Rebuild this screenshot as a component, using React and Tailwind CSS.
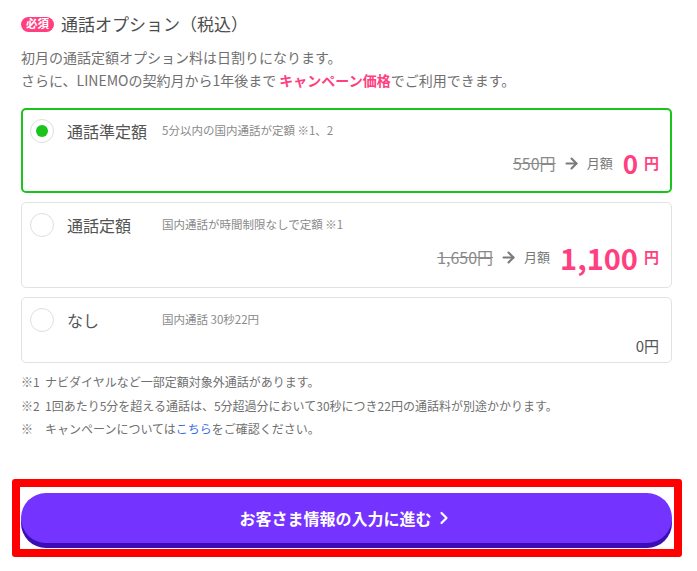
import React from "react";
import { ArrowRight, ChevronRight } from "lucide-react";

const options = [
  {
    id: "jun",
    name: "通話準定額",
    desc: "5分以内の国内通話が定額 ※1、2",
    before: "550円",
    price: "0",
    big: "text-[26px]",
    selected: true,
  },
  {
    id: "teigaku",
    name: "通話定額",
    desc: "国内通話が時間制限なしで定額 ※1",
    before: "1,650円",
    price: "1,100",
    big: "text-[29px]",
    selected: false,
  },
];

const Radio = ({ checked }) => (
  <span className="flex h-[24px] w-[24px] shrink-0 items-center justify-center rounded-full border border-[#dedede] bg-white">
    {checked && <span className="h-[12px] w-[12px] rounded-full bg-[#1bc41b]" />}
  </span>
);

const OptionCard = ({ option }) => (
  <div
    className={
      option.selected
        ? "rounded-[5px] border-2 border-[#1bc41b] pl-[7px] pr-[11px] pt-[9px] pb-[13px]"
        : "rounded-[5px] border border-[#e2e2e2] pl-[8px] pr-[12px] pt-[10px] pb-[15px]"
    }
  >
    <div className="flex h-[24px] items-center">
      <Radio checked={option.selected} />
      <span className="ml-[13px] w-[95px] text-[16px] text-[#555]">{option.name}</span>
      <span className="text-[11.5px] text-[#8a8a8a]">{option.desc}</span>
    </div>
    <div className="mt-[5px] flex h-[30px] items-center justify-end">
      <span className="text-[16px] text-[#8a8a8a] line-through">{option.before}</span>
      <ArrowRight className="ml-[7px] text-[#7a7a7a]" size={17} strokeWidth={3} />
      <span className="ml-[7px] text-[13px] text-[#777]">月額</span>
      <span className={`ml-[10px] font-bold leading-none text-[#ff3f80] ${option.big}`}>
        {option.price}
      </span>
      <span className="ml-[6px] text-[15px] font-bold text-[#ff3f80]">円</span>
    </div>
  </div>
);

const notes = [
  { mark: "※1", body: <>ナビダイヤルなど一部定額対象外通話があります。</> },
  { mark: "※2", body: <>1回あたり5分を超える通話は、5分超過分において30秒につき22円の通話料が別途かかります。</> },
  {
    mark: "※",
    body: (
      <>
        キャンペーンについては<a href="#" className="text-[#3d6fe6]">こちら</a>をご確認ください。
      </>
    ),
  },
];

export default function App() {
  return (
    <div className="min-h-[571px] bg-white font-['Noto_Sans_CJK_JP','Noto_Sans',sans-serif] text-[#555]">
      <div className="ml-[21px] w-[651px] pt-[12px]">
        <div className="flex h-[24px] items-center">
          <span className="flex h-[15px] w-[33px] items-center justify-center rounded-full bg-[#ff3f80] text-[11.5px] font-bold leading-none text-white">
            必須
          </span>
          <h2 className="ml-[7px] text-[17px] text-[#4d4d4d]">通話オプション（税込）</h2>
        </div>

        <div className="mt-[10px] text-[14px] leading-[23px] text-[#707070]">
          <p>初月の通話定額オプション料は日割りになります。</p>
          <p>
            さらに、LINEMOの契約月から1年後まで <span className="font-bold text-[#ff3f80]">キャンペーン価格</span>でご利用できます。
          </p>
        </div>

        <div className="mt-[16px] flex flex-col gap-[9px]">
          <OptionCard option={options[0]} />
          <OptionCard option={options[1]} />
          <div className="rounded-[5px] border border-[#e2e2e2] pl-[8px] pr-[12px] pt-[10px] pb-[6px]">
            <div className="flex h-[24px] items-center">
              <Radio checked={false} />
              <span className="ml-[13px] w-[95px] text-[16px] text-[#555]">なし</span>
              <span className="text-[11.5px] text-[#8a8a8a]">国内通話 30秒22円</span>
            </div>
            <div className="mt-[4px] flex h-[20px] items-center justify-end text-[15px] text-[#555]">
              0円
            </div>
          </div>
        </div>

        <ul className="mt-[7px] text-[12px] leading-[23.5px] text-[#707070]">
          {notes.map((n) => (
            <li key={n.mark} className="flex">
              <span className="w-[24px] shrink-0">{n.mark}</span>
              <span>{n.body}</span>
            </li>
          ))}
        </ul>
      </div>

      <div className="ml-[12px] mt-[38px] w-[670px] rounded-[3px] border-8 border-[#ff0000] pt-[6px] pb-[6px] pl-[1px] pr-[2px]">
        <button className="flex h-[50px] w-full items-center justify-center rounded-full bg-[#7433ff] text-[16px] font-bold text-white shadow-[0_5px_0_#3c0db4]">
          お客さま情報の入力に進む
          <ChevronRight className="ml-[2px]" size={20} strokeWidth={2.6} />
        </button>
      </div>
    </div>
  );
}
